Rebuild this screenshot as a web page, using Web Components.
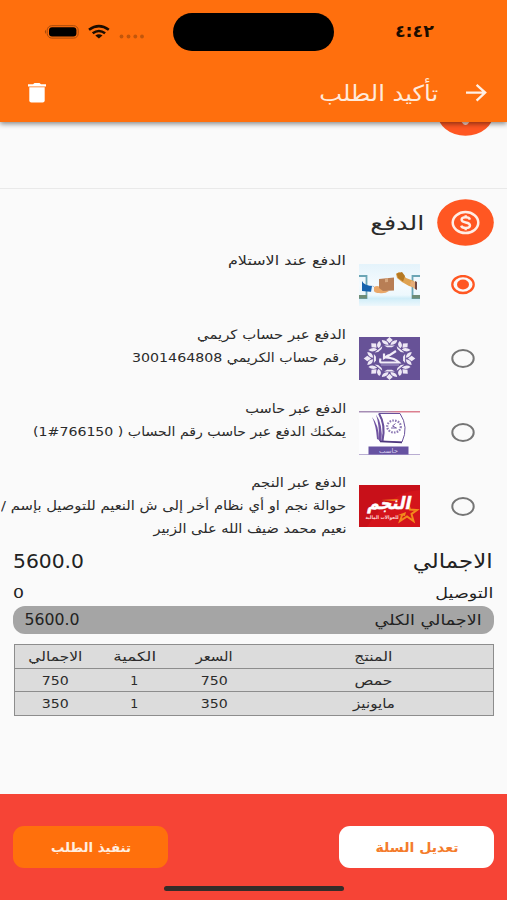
<!DOCTYPE html>
<html lang="ar" dir="rtl">
<head>
<meta charset="utf-8">
<title>تأكيد الطلب</title>
<style>
    body {
        margin: 0;
        background: #fafafa;
        color: #2b2b2b;
        font-family: "DejaVu Sans", "Noto Sans", sans-serif;
        overflow: hidden;
    }
</style>
</head>
<body>
<checkout-page></checkout-page>

<script>
function define(name, html, ready) {
    const template = document.createElement('template');
    template.innerHTML = html;
    customElements.define(name, class extends HTMLElement {
        connectedCallback() {
            if (this.shadowRoot) return;
            this.attachShadow({ mode: 'open' });
            this.shadowRoot.appendChild(template.content.cloneNode(true));
            if (ready) ready(this, this.shadowRoot);
        }
    });
}

// one line of text, condensed or widened to the width in its "w" attribute
define('text-line', `
    <style>
        :host { display: block; white-space: nowrap; flex: none; }
        span { display: inline-block; transform-origin: right center; }
    </style>
    <span><slot></slot></span>
`, (el, root) => {
    const span = root.querySelector('span');
    const w = Number(el.getAttribute('w'));
    el.style.width = w + 'px';
    span.style.transform = 'scaleX(' + w / span.getBoundingClientRect().width + ')';
});

define('status-bar', `
    <style>
        :host { display: grid; grid-template-columns: 173px 161px 173px; height: 64px; align-items: center; color: #1c0d00; }
        .time { padding-right: 73px; font-size: 17px; font-weight: bold; line-height: 20px; padding-bottom: 2px; }
        .island { height: 38px; border-radius: 19px; background: #000; }
        svg { display: block; }
    </style>
    <div class="time"><text-line w="39">٤:٤٢</text-line></div>
    <div class="island"></div>
    <svg width="173" height="64" viewBox="0 0 173 64">
        <rect x="47.2" y="25.7" width="31" height="12.4" rx="4.5" fill="none" stroke="#a84b0b"/>
        <path d="M46 29.8Q43.6 31.8 46 34Z" fill="#a84b0b"/>
        <rect x="49" y="27.2" width="27.4" height="9.4" rx="3" fill="#000"/>
        <g fill="none" stroke="#1c0d00" stroke-width="2.6">
            <path d="M89 29.8Q98.9 22.4 108.8 29.8"/>
            <path d="M92.7 33.3Q98.9 28.7 105.1 33.3"/>
        </g>
        <path d="M95.3 35.6Q98.9 32.8 102.5 35.6L98.9 38.4Z" fill="#1c0d00"/>
        <g fill="#c2560b">
            <circle cx="121.5" cy="36.5" r="1.9"/><circle cx="128.5" cy="36.5" r="1.9"/>
            <circle cx="135.3" cy="36.5" r="1.9"/><circle cx="142" cy="36.5" r="1.9"/>
        </g>
    </svg>
`);

define('app-header', `
    <style>
        :host {
            display: block;
            position: relative;
            height: 122px;
            background: #ff6f0d;
            box-shadow: 0 2px 5px rgba(0, 0, 0, .45);
        }
        .bar { display: flex; align-items: center; height: 58px; padding: 0 20px 0 27px; color: #ffeadb; }
        .title { margin-right: 28px; margin-left: auto; font-size: 22px; line-height: 58px; padding-top: 1px; }
        svg { display: block; }
    </style>
    <status-bar></status-bar>
    <div class="bar">
        <svg width="21" height="20" viewBox="0 0 21 20" fill="none" stroke="#fff0e6" stroke-width="2.3">
            <path d="M0 9.6H19M10.6 1.8L19.2 9.6L10.6 17.6"/>
        </svg>
        <div class="title"><text-line w="119"><slot></slot></text-line></div>
        <svg width="20" height="20" viewBox="0 0 20 20" fill="#fff">
            <path d="M1 1.2H6L7.5 0H12.5L14 1.2H19V3.4H1Z"/>
            <path d="M2.3 4.2H17.7V17.5Q17.7 19.6 15.6 19.6H4.4Q2.3 19.6 2.3 17.5Z"/>
        </svg>
    </div>
`);

define('money-badge', `
    <style>
        :host { display: block; flex: none; width: 57px; height: 47px; }
        svg { display: block; }
        .pin { display: none; }
        :host([pin]) .coin { display: none; }
        :host([pin]) .pin { display: inline; }
    </style>
    <svg width="57" height="47" viewBox="0 0 57 47">
        <ellipse cx="28.5" cy="23.5" rx="28.3" ry="23.3" fill="#ff5722"/>
        <path class="pin" d="M20 19Q20 10 28.500 10T37 19Q37 27 32 33.500Q28.500 38.500 25 33.500Q20 27 20 19Z" fill="#ffd9cc"/>
        <g class="coin" fill="none" stroke="#ffeee6">
            <ellipse cx="28.5" cy="23.6" rx="12.8" ry="10.5" stroke-width="2.5"/>
            <path d="M33 20.6Q32.2 18.3 28.7 18.3Q24.6 18.3 24.6 20.8Q24.6 22.8 28.7 23.5Q33 24.2 33 26.5Q33 29 28.7 29Q24.8 29 24.2 26.6M28.7 16.2V18.5M28.7 28.8V31.2" stroke-width="2.4"/>
        </g>
    </svg>
`);

define('radio-dot', `
    <style>
        :host { display: block; }
        svg { display: block; }
        ellipse { fill: none; stroke: #757575; stroke-width: 2; }
        .dot { display: none; }
        :host([checked]) ellipse { stroke: #ff5722; stroke-width: 2.3; }
        :host([checked]) .dot { display: inline; fill: #ff5722; stroke: none; }
    </style>
    <svg width="24" height="20" viewBox="0 0 24 20">
        <ellipse cx="12" cy="9.500" rx="10.700" ry="8.500"/>
        <ellipse class="dot" cx="12" cy="9.500" rx="6" ry="5"/>
    </svg>
`);

define('pay-option', `
    <style>
        :host { display: flex; height: 74px; box-sizing: border-box; padding-right: 32px; }
        radio-dot { margin-top: 26px; }
        .pic { flex: none; width: 61px; margin: 14px 31px 0 13px; }
        .lines { font-size: 13px; line-height: 23px; }
    </style>
    <radio-dot></radio-dot>
    <div class="pic"><slot name="pic"></slot></div>
    <div class="lines"><slot></slot></div>
`, (el, root) => {
    if (el.hasAttribute('checked')) root.querySelector('radio-dot').setAttribute('checked', '');
});

define('logo-delivery', `
    <style>:host, svg { display: block; } :host { padding-top: 1px; }</style>
    <svg width="61" height="42" viewBox="0 0 61 42">
        <defs><linearGradient id="g" x1="0" y1="0" x2="0" y2="1">
            <stop offset="0" stop-color="#e4f3fb"/><stop offset=".5" stop-color="#f5fbfe"/><stop offset=".74" stop-color="#edf8fd"/><stop offset=".82" stop-color="#d0edf8"/><stop offset="1" stop-color="#eef8fc"/>
        </linearGradient></defs>
        <rect width="61" height="42" fill="url(#g)"/>
        <path d="M0 12H7.5V34H0M61 12H53.5V34H61" fill="none" stroke="#6aa5b5" stroke-width="1.8"/>
        <path d="M0 31H8V34.500H0ZM53 31H61V34.500H53Z" fill="#6f8d77"/>
        <path d="M3 17Q5 22 15 22L14 28L3 27Z" fill="#1763ae"/>
        <path d="M13 22L17 23L15 28L12 28Z" fill="#eef5fb"/>
        <path d="M15 23Q19 20 24 25L30 27Q26 30 20 29Q16 29 15 27Z" fill="#e9a768"/>
        <path d="M20 15L35 13.500V26.500L24 27L20 24Z" fill="#b87e55"/>
        <path d="M26 14.400L29 14V18L26 18.300Z" fill="#d7a77e"/>
        <path d="M37 10L40 8L44 10.500L47 14L55 17L57 24L50 22L43 18L38 14Z" fill="#dfa352"/>
        <path d="M37.500 9.500L43 8L46 12L44 17.500L39 14Z" fill="#b57922"/>
        <path d="M52 17L57 18L56 25L51 21Z" fill="#e5ad79"/>
        <path d="M56 17L58 18V26L56 25Z" fill="#704943"/>
    </svg>
`);

define('logo-kuraimi', `
    <style>:host, svg { display: block; }</style>
    <svg width="61" height="43" viewBox="0 0 61 43">
        <rect width="61" height="43" fill="#675297"/>
        <g id="ring" fill="#eee8f5"></g>
        <path d="M37 14L27 20.500Q36 21 40 25.500H22Q20.500 25 21.500 21.500M25 16.500V21L30 18" fill="none" stroke="#f2edf8" stroke-width="2.2"/>
        <path d="M22 28H40" stroke="#a99bcb" stroke-width="1"/>
    </svg>
`, (el, root) => {
    let leaves = '';
    for (let a = 0; a < 360; a += 45) {
        leaves += `<g transform="translate(30.5 21.5) scale(1.2 1) rotate(${a})">
            <path d="M0 -21.500L2.700 -18.500L0 -15.300L-2.700 -18.500Z"/>
            <path d="M.8 -13.600Q1 -18 6.400 -18.500Q6.300 -14 .8 -13.600ZM-.8 -13.600Q-1 -18 -6.400 -18.500Q-6.300 -14 -.8 -13.600Z"/>
            <path d="M-4.500 -13H4.500L2 -11.300H-2Z"/>
        </g>`;
    }
    root.querySelector('#ring').innerHTML = leaves;
});

define('logo-haseb', `
    <style>:host, svg { display: block; }</style>
    <svg width="61" height="44" viewBox="0 0 61 44">
        <rect width="61" height="44" fill="#fdfdfe"/>
        <defs><linearGradient id="top"><stop offset=".4" stop-color="#a68db5"/><stop offset=".65" stop-color="#dc7f90"/></linearGradient></defs>
        <rect y="0" width="61" height="1.500" fill="url(#top)"/>
        <path d="M13 6Q20 14 20 29L18 28Q17 14 13 6ZM17 3.500Q24 13 22.500 31L20 30Q20.500 14 17 3.500Z" fill="#7154a2"/>
        <path d="M20 2.500H41Q50 16 43 31L23 30Q27 15 20 2.500Z" fill="#fff" stroke="#69519b" stroke-width="1"/>
        <path d="M20 2.500Q27 14 23.500 30" fill="none" stroke="#68509a" stroke-width="2"/>
        <ellipse cx="35" cy="15.500" rx="6.800" ry="6" fill="none" stroke="#8e7bb5" stroke-width="2.200" stroke-dasharray="1.600 1.200"/>
        <path d="M36.500 12.500L33.500 15L37.500 17H32" fill="none" stroke="#7760a5"/>
        <path d="M21 30.500L43 31.500" stroke="#4c377c" stroke-width="1.600"/>
        <path d="M0 43.500H61" stroke="#b9add2" stroke-width="1"/>
        <rect x="9.500" y="35.500" width="40" height="8" fill="#6652a1"/>
        <text x="29.500" y="41.500" font-size="6.500" text-anchor="middle" fill="#d9d0ef" textLength="19" lengthAdjust="spacingAndGlyphs">حاسب</text>
    </svg>
`);

define('logo-najm', `
    <style>:host, svg { display: block; }</style>
    <svg width="61" height="42" viewBox="0 0 61 42">
        <rect width="61" height="42" fill="#d4141b"/>
        <path d="M0 0H61V5Q30 7 8 42H0Z" fill="#c81019"/>
        <path d="M49 18L51 24.5L58 25L52.5 29L54.500 36L48 31.5L41 36L43.5 29" fill="none" stroke="#f28a1c" stroke-width="2"/>
        <path d="M22 15L40 14L36 16ZM47 27L39 30L46 31Z" fill="#f28a1c"/>
        <g transform="translate(29.500 24) skewX(-12)">
            <text y="0" font-size="17" font-weight="bold" text-anchor="middle" fill="#fff" stroke="#fff" stroke-width=".5" textLength="43" lengthAdjust="spacingAndGlyphs">النجم</text>
        </g>
        <text x="23" y="33.5" font-size="5" font-weight="bold" text-anchor="middle" fill="#ffd9d4" textLength="33" lengthAdjust="spacingAndGlyphs">للحوالات المالية</text>
    </svg>
`);

define('payment-section', `
    <style>
        :host { display: block; }
        .previous { height: 67px; box-sizing: border-box; padding-right: 13px; overflow: hidden; border-bottom: 1px solid #e9e9e9; }
        .previous money-badge { margin-top: -33px; }
        .head { display: flex; align-items: center; height: 60px; box-sizing: border-box; padding: 6px 13px 0 0; }
        .head div { margin-right: 13px; font-size: 20px; line-height: 40px; padding-top: 1px; }
        .head money-badge { margin-bottom: -1px; }
        .options { height: 296px; }
    </style>
    <div class="previous"><money-badge pin></money-badge></div>
    <div class="head"><money-badge></money-badge><div><text-line w="54">الدفع</text-line></div></div>
    <div class="options">
        <pay-option checked>
            <logo-delivery slot="pic"></logo-delivery>
            <text-line w="118">الدفع عند الاستلام</text-line>
        </pay-option>
        <pay-option>
            <logo-kuraimi slot="pic"></logo-kuraimi>
            <text-line w="149">الدفع عبر حساب كريمي</text-line>
            <text-line w="214">رقم حساب الكريمي 3001464808</text-line>
        </pay-option>
        <pay-option>
            <logo-haseb slot="pic"></logo-haseb>
            <text-line w="101">الدفع عبر حاسب</text-line>
            <text-line w="313">يمكنك الدفع عبر حاسب رقم الحساب ( 766150#1)</text-line>
        </pay-option>
        <pay-option>
            <logo-najm slot="pic"></logo-najm>
            <text-line w="95">الدفع عبر النجم</text-line>
            <text-line w="345">حوالة نجم او أي نظام أخر إلى ش النعيم للتوصيل بإسم /</text-line>
            <text-line w="193">نعيم محمد ضيف الله على الزبير</text-line>
        </pay-option>
    </div>
`);

define('order-totals', `
    <style>
        :host { display: block; padding: 0 14px 0 13px; color: #222; }
        .row { display: flex; justify-content: space-between; }
        .big { height: 37px; line-height: 33px; font-size: 20px; }
        .small { height: 24px; line-height: 23px; font-size: 14px; }
        .sum { height: 28px; line-height: 29px; padding: 0 12px 0 11px; margin-right: -1px; font-size: 15px; background: #a5a5a5; border-radius: 12px; }
    </style>
    <div class="row big"><text-line w="80">الاجمالي</text-line><text-line w="71">5600.0</text-line></div>
    <div class="row small"><text-line w="58">التوصيل</text-line><text-line w="11">0</text-line></div>
    <div class="row sum"><text-line w="107">الاجمالي الكلي</text-line><text-line w="55">5600.0</text-line></div>
`);

define('order-table', `
    <style>
        :host { display: block; margin: 10px 13px 0 14px; border: 1px solid #8d8d8d; background: #dcdcdc; font-size: 13px; }
        .row { display: grid; grid-template-columns: 3fr 1fr 1fr 1fr; height: 22.67px; line-height: 24px; }
        .row + .row { border-top: 1px solid #8d8d8d; }
        text-line { justify-self: center; }
    </style>
    <div class="row"><text-line w="38">المنتج</text-line><text-line w="37">السعر</text-line><text-line w="43">الكمية</text-line><text-line w="54">الاجمالي</text-line></div>
    <div class="row"><text-line w="38">حمص</text-line><text-line w="27">750</text-line><text-line w="8">1</text-line><text-line w="27">750</text-line></div>
    <div class="row"><text-line w="42">مايونيز</text-line><text-line w="27">350</text-line><text-line w="8">1</text-line><text-line w="27">350</text-line></div>
`);

define('round-button', `
    <style>
        :host { display: flex; justify-content: center; width: 155px; height: 42px; border-radius: 11px; font-size: 13px; font-weight: bold; line-height: 44px; background: var(--fill); color: var(--ink); }
    </style>
    <slot></slot>
`);

define('action-bar', `
    <style>
        :host { display: flex; flex-direction: column; align-items: center; height: 106px; box-sizing: border-box; padding-top: 32px; background: #f64436; }
        .buttons { align-self: stretch; display: flex; justify-content: space-between; padding: 0 13px; }
        .edit { --fill: #fff; --ink: #f47c2c; }
        .send { --fill: #ff700c; --ink: #ffeee0; }
        .home { width: 180px; height: 5px; margin-top: 18px; border-radius: 3px; background: #352c29; }
    </style>
    <div class="buttons">
        <round-button class="edit"><text-line w="83">تعديل السلة</text-line></round-button>
        <round-button class="send"><text-line w="80">تنفيذ الطلب</text-line></round-button>
    </div>
    <div class="home"></div>
`);

define('checkout-page', `
    <style>
        :host { display: flex; flex-direction: column; width: 507px; height: 900px; overflow: hidden; }
        app-header { z-index: 1; flex: none; }
        action-bar { margin-top: auto; flex: none; }
    </style>
    <app-header>تأكيد الطلب</app-header>
    <payment-section></payment-section>
    <order-totals></order-totals>
    <order-table></order-table>
    <action-bar></action-bar>
`);
</script>
</body>
</html>
